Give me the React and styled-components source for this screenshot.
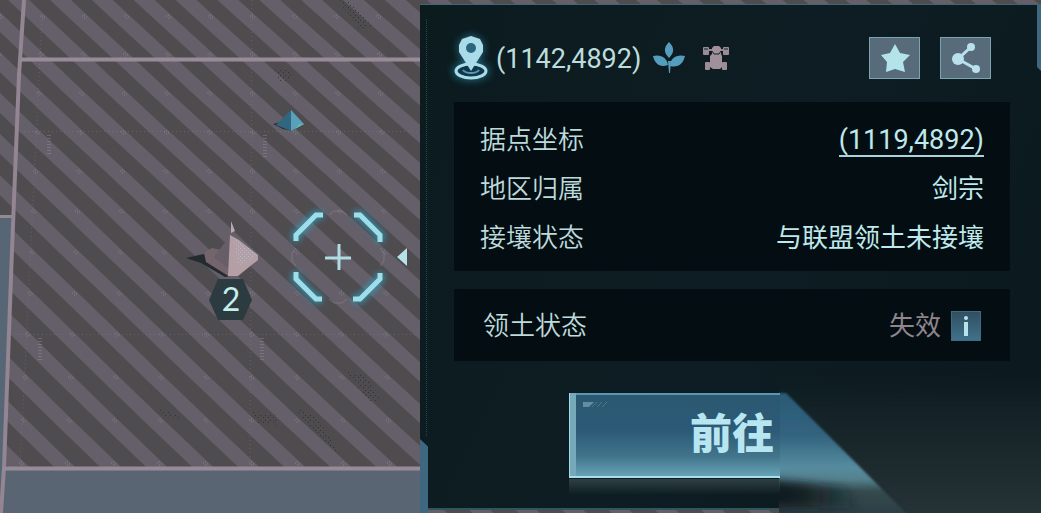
import React from "react";
import styled, { createGlobalStyle } from "styled-components";

const GlobalStyle = createGlobalStyle`
  *, *::before, *::after { box-sizing: border-box; }
  body {
    margin: 0;
    background: #4f4c50;
    color: #bcdcde;
    font-family: Roboto, "Noto Sans CJK SC", sans-serif;
  }
  p, dl, dd { margin: 0; }
`;

const Stage = styled.main`
  position: relative;
  overflow: hidden;
  min-height: 100vh;
  display: grid;
  grid-template-columns: minmax(0, 420fr) minmax(0, 621fr);
  padding: 4px 0 3px;
`;

const MapArt = styled.svg`
  position: absolute;
  inset: 0;
  width: 100%;
  height: 100%;
`;

const Panel = styled.section`
  position: relative;
  grid-column: 2;
  display: flex;
  flex-direction: column;
  padding: 32px 31px 28px 34px;
  border-top: 1px solid #3c6878;
  border-bottom: 2px solid #31545f;
  background: linear-gradient(115deg, #0b1b1e, #0d1d23 50%, #0b191d);

  &::before {
    content: "";
    position: absolute;
    top: 14px;
    bottom: 72px;
    left: 6px;
    border-left: 1px dotted #28474d;
  }

  &::after {
    content: "";
    position: absolute;
    right: 0;
    bottom: -5px;
    width: 42%;
    height: 148px;
    background: linear-gradient(#0e1d22, #18262a 50%, #253236);
    mask-image: linear-gradient(to bottom, transparent, #000 30%);
  }
`;

const EdgeTab = styled.span`
  position: absolute;
  background: #3f6880;
  ${({ $side }) =>
    $side === "right"
      ? "top: 0; right: 0; width: 4px; height: 66px; clip-path: polygon(0 0, 100% 0, 100% 100%, 0 94%);"
      : "bottom: -5px; left: 0; width: 8px; height: 74px; clip-path: polygon(0 0, 100% 10%, 100% 100%, 0 100%);"}
`;

const Header = styled.header`
  display: flex;
  align-items: center;
  height: 42px;
  margin: 0 19px 23px 0;
`;

const Icon = styled.svg`
  display: block;
  flex: none;
  overflow: visible;
`;

const Place = styled.p`
  margin: 0 12px 0 5px;
  padding-top: 2px;
  font-size: 27px;
  line-height: 42px;
  white-space: nowrap;
`;

const Traits = styled.div`
  display: flex;
  align-items: center;
  gap: 18px;
`;

const Actions = styled.div`
  display: flex;
  gap: 20px;
  margin-left: auto;
`;

const ActionButton = styled.button`
  display: grid;
  place-items: center;
  width: 51px;
  height: 42px;
  padding: 0;
  border: 1px solid #7ba5ac;
  background: #586b7b;
  cursor: pointer;
`;

const Card = styled.dl`
  padding: ${({ $single }) => ($single ? "13px 29px 11px" : "14px 26px 8px")};
  margin-bottom: ${({ $single }) => ($single ? "32px" : "18px")};
  background: #040e12;
`;

const Row = styled.div`
  display: flex;
  align-items: center;
  justify-content: space-between;
  gap: 16px;
  font-size: 26px;
  line-height: ${({ $tight }) => ($tight ? "48px" : "49px")};
`;

const Term = styled.dt`
  color: #bddadc;
  font-weight: 350;
`;

const Value = styled.dd`
  display: flex;
  align-items: center;
  gap: 10px;
  color: ${({ $muted }) => ($muted ? "#8e858d" : "#bfe9ec")};
`;

const CoordLink = styled.a`
  border-bottom: 2px solid #a9d3da;
  color: inherit;
  font-size: 27px;
  line-height: 30px;
  text-decoration: none;
`;

const InfoButton = styled.button`
  display: grid;
  place-items: center;
  width: 30px;
  height: 30px;
  padding: 0;
  border: 1px solid #406a80;
  background: linear-gradient(#314f62, #40718a);
  cursor: pointer;
`;

const GoButton = styled.button`
  position: relative;
  z-index: 1;
  align-self: center;
  width: 326px;
  height: 85px;
  padding: 0;
  border: 0;
  background: none;
  color: #b8e6f0;
  font-family: "Liberation Serif", "Noto Sans CJK SC", serif;
  font-size: 42px;
  line-height: 85px;
  font-weight: 900;
  cursor: pointer;
`;

const GoArt = styled.svg`
  position: absolute;
  top: 0;
  left: 0;
  overflow: visible;
`;

const GoLabel = styled.span`
  position: relative;
`;

/* Perspective lattice of the map: rows spread and columns fan out toward the bottom. */
const rowYs = [-22, 16, 54, 93, 132, 171, 211, 252, 293, 334, 377, 420, 463, 507, 552];
const latticeX = (column, y) => 252 + column * (42 + (4 * (y - 16)) / 447) - (y > 300 ? 1 : 0);

const stripes = Array.from({ length: 44 }, (_, n) => {
  const start = n - 24;
  const upper = rowYs.map((y, r) => [latticeX(start + r, y) + 4, y]);
  const lower = rowYs.map((y, r) => [latticeX(start + r, y) - 17, y]).reverse();
  return [...upper, ...lower].map(([x, y]) => `${x.toFixed(1)},${y}`).join(" ");
});

const nodes = rowYs.flatMap((y) =>
  Array.from({ length: 10 }, (_, n) => [latticeX(n - 6, y), y])
);

const corner = "M-42 -16V-22L-22 -42H-15";

function WorldMap() {
  return (
    <MapArt viewBox="0 0 1041 513" preserveAspectRatio="xMinYMin slice" role="img" aria-label="地图">
      <defs>
        <filter id="glow" x="-40%" y="-40%" width="180%" height="180%">
          <feGaussianBlur stdDeviation="3" />
        </filter>
        <pattern id="grain" width="4" height="4" patternUnits="userSpaceOnUse">
          <path d="M0 0h1v1H0zM2 2h1v1H2z" fill="#a8ccd0" opacity=".8" />
        </pattern>
        <pattern id="specks" width="5" height="5" patternUnits="userSpaceOnUse">
          <path d="M0 0h1v1H0zM3 2h1v1H3z" fill="#20282c" opacity=".7" />
        </pattern>
      </defs>
      <rect width="1041" height="513" fill="#4f4c50" />
      {stripes.map((points) => (
        <polygon key={points} points={points} fill="#645f69" />
      ))}
      {nodes.map(([x, y]) => (
        <path key={`${x}-${y}`} d={`M${x - 2} ${y}h1m1 -1h1m-1 3h1m1 -1h1`} stroke="#a79fac" opacity=".55" />
      ))}
      <g stroke="#918896" strokeDasharray="1 3" opacity=".35" fill="none">
        <path d="M42 16L20 467M252 0L250 467M20 131.500H420M10 334.500H420" />
      </g>
      <g stroke="#a59dab" strokeWidth="4" strokeDasharray="1 2" opacity=".35">
        <path d="M49 135V156M265 135V158M40 338V360M262 338V361" />
      </g>
      <g fill="url(#specks)">
        <path d="M338 0L350 2L372 26L360 30ZM275 70L290 68L292 80L280 82ZM252 412L275 414L278 426L258 424ZM292 405L318 418L340 455L322 440ZM345 370L365 376L382 400L370 402ZM152 408L178 414L180 418L165 417Z" />
      </g>

      <path d="M0 216H12L4 468L1 513H0Z" fill="#566675" />
      <path d="M3 468H420V513H2Z" fill="#5a6574" />
      <path d="M0 216.500H12" stroke="#938993" strokeWidth="3" />
      <path d="M24 0L19 75L12 250L4 468L1 513" stroke="#938592" strokeWidth="4" fill="none" />
      <path d="M21 59.500H420M3 468.500H420" stroke="#988b97" strokeWidth="4" />

      <path d="M273 124L281 122L292 131L283 129Z" fill="#1b3438" />
      <path d="M291 110L276 125L291 131Z" fill="#326680" />
      <path d="M291 110L304 124L291 131Z" fill="#59a0ba" />
      <path d="M299 124L304 124L295 129Z" fill="#63b8b5" />

      <path d="M186 258L208 253L212 264L230 276L225 277L201 263Z" fill="#242b30" />
      <path d="M204 253L212 248L230 252V277L206 262Z" fill="#74656d" />
      <path d="M230 236L220 249L214 257L230 270Z" fill="#675e67" />
      <path d="M230 235L239 240L258 255V260L238 276H228Z" fill="#b49fa7" />
      <path d="M234 238L258 255L238 266Z" fill="url(#grain)" />
      <path d="M231 221L235 231L231 233Z" fill="#b8a9b0" />
      <path d="M218 279H243L252 300L243 320H218L209 300Z" fill="#2c3b40" />
      <text x="231" y="311" textAnchor="middle" fill="#c4edeb" fontFamily="Lato, sans-serif" fontSize="32">
        2
      </text>

      <g transform="translate(338 257)" fill="none">
        {[0, 90, 180, 270].map((angle) => (
          <g key={angle} transform={`rotate(${angle})`}>
            <path d={corner} stroke="#2ba8c7" strokeWidth="8" filter="url(#glow)" opacity=".75" />
            <path d={corner} stroke="#9eddea" strokeWidth="5" />
            <path d="M-9 -42L-4 -46H4L9 -42" stroke="#8f8590" opacity=".6" />
          </g>
        ))}
        <path d="M-13 1H13M1 -13V13" stroke="#b0dce3" strokeWidth="3" />
      </g>
      <path d="M397 257L407 248V266Z" fill="#b5e1e8" />
    </MapArt>
  );
}

function PinIcon() {
  return (
    <Icon width="37" height="46" viewBox="0 0 37 46" aria-hidden="true">
      <defs>
        <filter id="pinGlow" x="-50%" y="-50%" width="200%" height="200%">
          <feGaussianBlur stdDeviation="4" />
        </filter>
      </defs>
      <g filter="url(#pinGlow)" opacity=".7" fill="#3292b4">
        <path d="M5 7L17 0L29 7V18L17 35L5 18Z" />
        <ellipse cx="17" cy="36" rx="18" ry="9" />
      </g>
      <ellipse cx="17" cy="36" rx="15" ry="7" fill="#12364a" stroke="#a8dce7" strokeWidth="3" />
      <path d="M9 35C12 39 22 39 25 35" fill="none" stroke="#539bb3" strokeWidth="2" />
      <path d="M17 1L26 4L29 10V17L17 36L5 17V10L8 4Z" fill="#a9dbe8" />
      <circle cx="17" cy="13" r="5" fill="#2c647e" />
    </Icon>
  );
}

function LeafIcon() {
  return (
    <Icon width="32" height="32" viewBox="0 0 32 32" role="img" aria-label="植物" fill="#559dbe">
      <path d="M16 0C22 6 21 11 16 16C11 11 10 6 16 0Z" />
      <path d="M0 14C8 12 14 16 15 23C7 26 2 22 0 14Z" />
      <path d="M32 14C24 12 17 16 17 24C25 26 30 22 32 14Z" />
      <path d="M15 19H18L17 31H16Z" />
    </Icon>
  );
}

function BuggyIcon() {
  return (
    <Icon width="26" height="26" viewBox="0 0 26 26" role="img" aria-label="车辆">
      <path d="M6 5H20M6 20H20" stroke="#94838f" strokeWidth="2" />
      <path d="M9 3L11 1H16L18 3V9L19 11V22L17 24H10L7 22V11L9 9Z" fill="#a1909b" />
      <g fill="#9c8c98">
        <rect x="0" y="2" width="6" height="8" rx="1" />
        <rect x="20" y="2" width="6" height="8" rx="1" />
        <rect x="2" y="17" width="5" height="8" rx="1" />
        <rect x="19" y="17" width="5" height="8" rx="1" />
      </g>
      <path d="M9 6L11 9H16L18 6M1 4H5M21 4H25" fill="none" stroke="#142227" strokeWidth="1" />
    </Icon>
  );
}

function GoButtonArt() {
  return (
    <GoArt width="326" height="85" viewBox="0 0 326 85" aria-hidden="true">
      <defs>
        <linearGradient id="goFace" x1="0" y1="0" x2="0" y2="1">
          <stop offset="0" stopColor="#2b5770" />
          <stop offset=".45" stopColor="#2c5a77" />
          <stop offset=".75" stopColor="#42758b" />
          <stop offset="1" stopColor="#6aa6b9" />
        </linearGradient>
        <linearGradient id="goTail" gradientUnits="userSpaceOnUse" x1="0" y1="0" x2="0" y2="120">
          <stop offset="0" stopColor="#2b5a76" />
          <stop offset=".35" stopColor="#32637f" />
          <stop offset=".62" stopColor="#568c9f" />
          <stop offset=".72" stopColor="#54818d" />
          <stop offset=".82" stopColor="#34494e" />
          <stop offset="1" stopColor="#2d4045" />
        </linearGradient>
        <linearGradient id="goShade" x1="0" y1="0" x2="1" y2="0">
          <stop offset="0" stopColor="#0e191c" />
          <stop offset=".4" stopColor="#0e191c" stopOpacity=".85" />
          <stop offset="1" stopColor="#0e191c" stopOpacity="0" />
        </linearGradient>
        <linearGradient id="goReflection" x1="0" y1="0" x2="0" y2="1">
          <stop offset="0" stopColor="#3d5054" />
          <stop offset="1" stopColor="#3d5054" stopOpacity="0" />
        </linearGradient>
        <filter id="soft" x="-20%" y="-60%" width="140%" height="220%">
          <feGaussianBlur stdDeviation="4" />
        </filter>
        <filter id="edge" x="-5%" y="-5%" width="110%" height="110%">
          <feGaussianBlur stdDeviation="1" />
        </filter>
        <clipPath id="tailClip">
          <path d="M210 -4H400V121H210Z" />
        </clipPath>
      </defs>
      <g clipPath="url(#tailClip)">
        <path d="M200 0H217L345 128H200Z" fill="url(#goTail)" filter="url(#edge)" />
        <path d="M190 86L275 93L295 116L190 114Z" fill="url(#goShade)" filter="url(#soft)" />
      </g>
      <path d="M0 86H211V102H0Z" fill="url(#goReflection)" opacity=".7" />
      <path d="M0 0H211V85H0Z" fill="url(#goFace)" />
      <path d="M0 0H211V2H0Z" fill="#5698b1" />
      <path d="M0 0H7V85H0Z" fill="#76a9ba" />
      <path d="M0 0H1V85H0Z" fill="#a3dce5" />
      <path d="M0 83H211V85H0Z" fill="#a9dfeb" />
      <path d="M14 9H25L20 14H14Z" fill="#648da2" />
      <path d="M23 14L28 9M28 14L33 9M33 14L38 9" stroke="#50788e" strokeWidth="1" />
    </GoArt>
  );
}

export default function App() {
  return (
    <>
      <GlobalStyle />
      <Stage>
        <WorldMap />
        <Panel>
          <EdgeTab $side="left" />
          <EdgeTab $side="right" />
          <Header>
            <PinIcon />
            <Place>(1142,4892)</Place>
            <Traits>
              <LeafIcon />
              <BuggyIcon />
            </Traits>
            <Actions>
              <ActionButton type="button" aria-label="收藏">
                <Icon width="30" height="28" viewBox="0 0 30 28" aria-hidden="true">
                  <path d="M15 0L20 9L30 11L23 18L25 28L15 25L6 28L7 18L1 11L10 9Z" fill="#b3e4eb" />
                </Icon>
              </ActionButton>
              <ActionButton type="button" aria-label="分享">
                <Icon width="30" height="30" viewBox="0 0 30 30" aria-hidden="true" fill="#b8e1ed">
                  <path d="M20 4L7 16L25 26" fill="none" stroke="#b8e1ed" strokeWidth="3" />
                  <circle cx="20" cy="4" r="4" />
                  <circle cx="7" cy="16" r="6" />
                  <circle cx="25" cy="26" r="4" />
                </Icon>
              </ActionButton>
            </Actions>
          </Header>
          <Card>
            <Row>
              <Term>据点坐标</Term>
              <Value>
                <CoordLink href="#1119,4892">(1119,4892)</CoordLink>
              </Value>
            </Row>
            <Row>
              <Term>地区归属</Term>
              <Value>剑宗</Value>
            </Row>
            <Row>
              <Term>接壤状态</Term>
              <Value>与联盟领土未接壤</Value>
            </Row>
          </Card>
          <Card $single>
            <Row $tight>
              <Term>领土状态</Term>
              <Value $muted>
                失效
                <InfoButton type="button" aria-label="说明">
                  <Icon width="6" height="20" viewBox="0 0 6 20" aria-hidden="true" fill="#b9e3ec">
                    <circle cx="3" cy="2" r="2" />
                    <path d="M1 6H5V20H1Z" />
                  </Icon>
                </InfoButton>
              </Value>
            </Row>
          </Card>
          <GoButton type="button">
            <GoButtonArt />
            <GoLabel>前往</GoLabel>
          </GoButton>
        </Panel>
      </Stage>
    </>
  );
}
